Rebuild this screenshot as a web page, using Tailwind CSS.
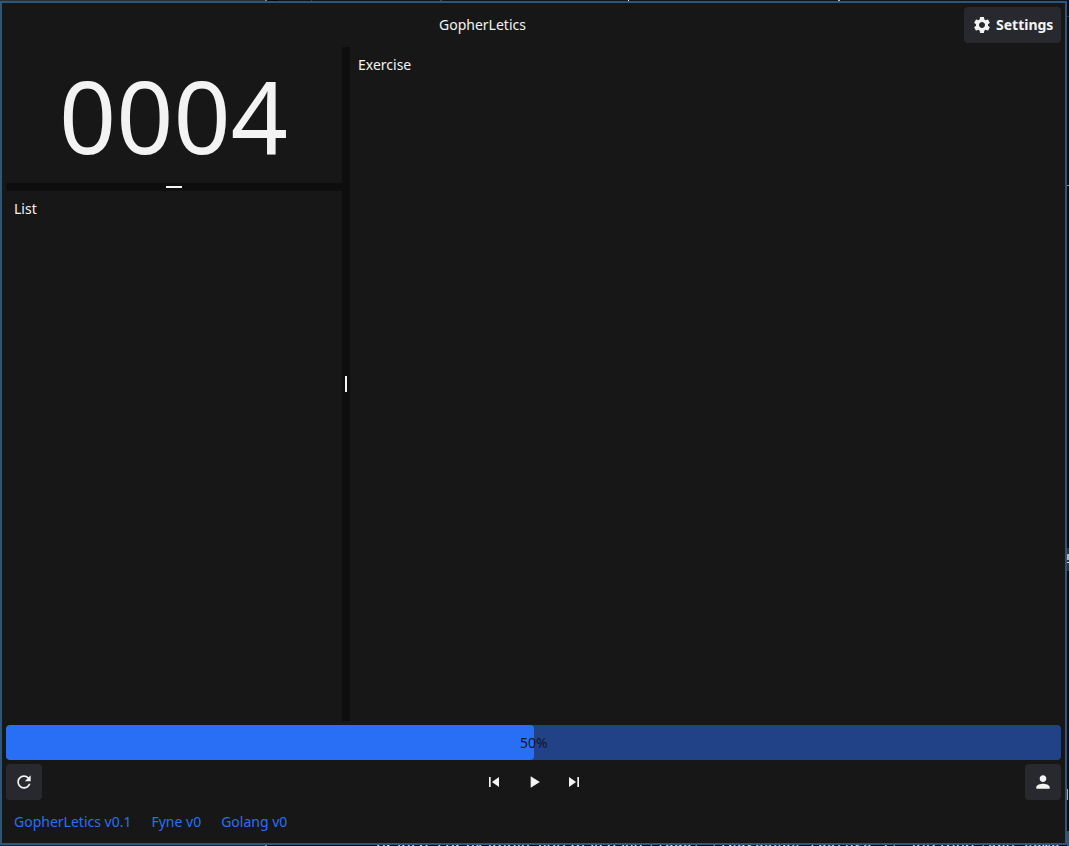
<!DOCTYPE html>
<html lang="en">
<head>
<meta charset="utf-8">
<title>GopherLetics</title>
<script src="https://cdn.jsdelivr.net/npm/@tailwindcss/browser@4"></script>
</head>
<body class="relative h-[846px] w-[1069px] overflow-hidden bg-[#05070d] font-['Noto_Sans',sans-serif] text-sm leading-5 text-[#f3f3f3]">
  <!-- desktop behind the window -->
  <div class="absolute left-0 top-0 h-px w-[267px] bg-[#27313a]"></div>
  <div class="absolute left-[265px] top-0 h-px w-[2px] bg-[#7b858c]"></div>
  <div class="absolute left-[277px] top-0 h-px w-[792px] bg-[#0d1420]"></div>
  <div class="absolute left-[311px] top-0 h-px w-px bg-[#38424c]"></div>
  <div class="absolute left-[440px] top-0 h-px w-[2px] bg-[#38424c]"></div>
  <div class="absolute left-[628px] top-0 h-px w-px bg-white"></div>
  <div class="absolute left-[838px] top-0 h-px w-[2px] bg-[#b0b8c0]"></div>
  <div class="absolute left-[1067px] top-[16px] h-px w-[2px] bg-[#27313a]"></div>
  <div class="absolute left-[1067px] top-[185px] h-px w-[2px] bg-[#8b8f94]"></div>
  <div class="absolute left-[1067px] top-[548px] h-[23px] w-[2px] bg-[#30343a]"></div>
  <div class="absolute left-[1067px] top-[554px] h-[6px] w-[2px] bg-[#b5b7ba]"></div>
  <div class="absolute left-[1067px] top-[562px] h-px w-[2px] bg-[#dcdcdc]"></div>
  <div class="absolute left-[1067px] top-[789px] h-[11px] w-px bg-[#a9b0b8]"></div>
  <div class="absolute left-[1067px] top-[831px] h-[15px] w-[2px] bg-[#4a4f56]"></div>
  <div class="absolute left-0 top-[845px] h-px w-[265px] bg-[#1d2b38]"></div>
  <div class="absolute left-[265px] top-[845px] h-px w-[2px] bg-[#7b858c]"></div>
  <div class="absolute left-[376px] top-[836px] whitespace-nowrap text-base leading-5 text-[#d5e2f0]">branch. For example, you may have <span class="font-['Liberation_Mono',monospace] text-[15px]">'logo' 'Increases-feature-1'</span>, and then <span class="font-['Liberation_Mono',monospace] text-[15px]">'any-some-b'</span></div>

  <!-- application window -->
  <div class="relative mt-px flex h-[844px] w-[1067px] flex-col gap-1 border-2 border-[#2a577c] bg-[#171717] p-1">
    <header class="grid h-9 shrink-0 grid-cols-[1fr_97px]">
      <h1 class="pt-2 pl-[433px]">GopherLetics</h1>
      <button class="flex items-center rounded bg-[#28292e] pl-2 font-bold">
        <svg class="mr-1 size-5" viewBox="0 0 24 24" fill="#f3f3f3"><path d="M19.14 12.94c.04-.3.06-.61.06-.94 0-.32-.02-.64-.07-.94l2.03-1.58c.18-.14.23-.41.12-.61l-1.92-3.32c-.12-.22-.37-.29-.59-.22l-2.39.96c-.5-.38-1.03-.7-1.62-.94l-.36-2.54c-.04-.24-.24-.41-.48-.41h-3.84c-.24 0-.43.17-.47.41l-.36 2.54c-.59.24-1.13.57-1.62.94l-2.39-.96c-.22-.08-.47 0-.59.22L2.74 8.87c-.12.21-.08.47.12.61l2.03 1.58c-.05.3-.09.63-.09.94s.02.64.07.94l-2.03 1.58c-.18.14-.23.41-.12.61l1.92 3.32c.12.22.37.29.59.22l2.39-.96c.5.38 1.03.7 1.62.94l.36 2.54c.05.24.24.41.48.41h3.84c.24 0 .44-.17.47-.41l.36-2.54c.59-.24 1.13-.56 1.62-.94l2.39.96c.22.08.47 0 .59-.22l1.92-3.32c.12-.22.07-.47-.12-.61l-2.01-1.58zM12 15.6c-1.98 0-3.6-1.62-3.6-3.6s1.62-3.6 3.6-3.6 3.6 1.62 3.6 3.6-1.62 3.6-3.6 3.6z"/></svg>
        Settings
      </button>
    </header>

    <main class="flex h-[674px] shrink-0">
      <section class="flex w-[336px] flex-col">
        <div class="flex h-[136px] items-center justify-center pr-px text-[100px] leading-[136px]">0004</div>
        <div class="flex h-2 items-center justify-center bg-[#0e0e0e]"><div class="h-0.5 w-4 bg-[#f3f3f3]"></div></div>
        <p class="px-2 py-2">List</p>
      </section>
      <div class="flex w-2 items-center justify-center bg-[#0e0e0e]"><div class="h-4 w-0.5 bg-[#f3f3f3]"></div></div>
      <section class="flex-1 p-2">Exercise</section>
    </main>

    <div class="flex h-[35px] shrink-0 overflow-hidden rounded bg-[#214287]">
      <div class="h-full w-[528px] rounded bg-[#296ff6]"></div>
      <span class="-ml-[14px] pt-2 text-[#171717]">50%</span>
    </div>

    <div class="flex h-9 shrink-0 items-center justify-between">
      <button class="flex size-9 items-center justify-center rounded bg-[#28292e]">
        <svg class="size-5" viewBox="0 0 24 24" fill="#f3f3f3"><path d="M17.65 6.35C16.2 4.9 14.21 4 12 4c-4.42 0-7.99 3.58-7.99 8s3.57 8 7.99 8c3.73 0 6.84-2.55 7.73-6h-2.08c-.82 2.33-3.04 4-5.65 4-3.31 0-6-2.69-6-6s2.69-6 6-6c1.66 0 3.14.69 4.22 1.78L13 11h7V4l-2.35 2.35z"/></svg>
      </button>
      <div class="flex gap-5">
        <svg class="size-5" viewBox="0 0 24 24" fill="#f3f3f3"><path d="M6 6h2v12H6zm3.5 6l8.5 6V6z"/></svg>
        <svg class="size-5" viewBox="0 0 24 24" fill="#f3f3f3"><path d="M8 5v14l11-7z"/></svg>
        <svg class="size-5" viewBox="0 0 24 24" fill="#f3f3f3"><path d="M6 18l8.5-6L6 6v12zM16 6v12h2V6h-2z"/></svg>
      </div>
      <button class="flex size-9 items-center justify-center rounded bg-[#28292e]">
        <svg class="size-5" viewBox="0 0 24 24" fill="#f3f3f3"><path d="M12 12c2.21 0 4-1.79 4-4s-1.79-4-4-4-4 1.79-4 4 1.79 4 4 4zm0 2c-2.67 0-8 1.34-8 4v2h16v-2c0-2.66-5.33-4-8-4z"/></svg>
      </button>
    </div>

    <footer class="flex gap-5 px-2 pt-2 text-[#296ff6]">
      <a>GopherLetics v0.1</a><a>Fyne v0</a><a>Golang v0</a>
    </footer>
  </div>
</body>
</html>
